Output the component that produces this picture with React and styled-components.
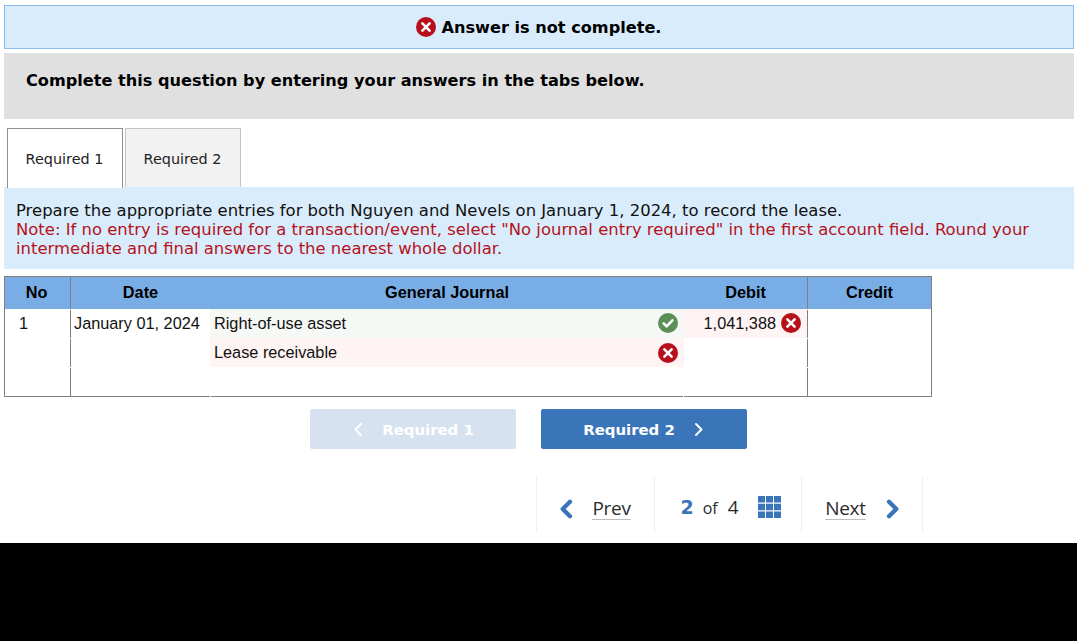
import React from 'react';
import styled, { createGlobalStyle } from 'styled-components';

const GlobalStyle = createGlobalStyle`
  html, body { margin: 0; padding: 0; background: #000; }
  body { font-family: "DejaVu Sans", sans-serif; }
`;

const Sheet = styled.div`
  width: 1077px;
  height: 543px;
  background: #fff;
  padding: 5px 3px 0 4px;
  box-sizing: border-box;
  overflow: hidden;
`;
const Filler = styled.div`
  height: 98px;
  background: #000;
`;

const Banner = styled.div`
  height: 44px;
  box-sizing: border-box;
  background: #d9ecfb;
  border: 1px solid #8dbbe8;
  display: flex;
  align-items: center;
  justify-content: center;
  gap: 5px;
  font-weight: bold;
  font-size: 16.15px;
  color: #000;
`;
const BannerText = styled.span`
  padding-top: 1px;
`;
const Instruction = styled.div`
  margin-top: 4px;
  height: 66px;
  box-sizing: border-box;
  background: #e0e0e0;
  padding: 17px 22px;
  font-weight: bold;
  font-size: 16.15px;
  line-height: 22px;
  color: #000;
`;

const Tabs = styled.div`
  display: flex;
  gap: 2px;
  margin: 9px 0 0 3px;
  height: 59px;
`;
const Tab = styled.div`
  width: 116px;
  height: ${p => (p.$active ? '60px' : '59px')};
  box-sizing: border-box;
  display: flex;
  align-items: center;
  justify-content: center;
  padding: 1px 1px 0 0;
  font-size: 14.4px;
  color: #222;
  position: relative;
  z-index: ${p => (p.$active ? 1 : 0)};
  background: ${p => (p.$active ? '#fff' : '#f2f2f2')};
  border: 1px solid ${p => (p.$active ? '#8f8f8f' : '#c4c4c4')};
  border-bottom: none;
`;

const Panel = styled.div`
  height: 82px;
  box-sizing: border-box;
  background: #d9ecfb;
  padding: 14px 12px 0 12px;
  font-size: 16.45px;
  line-height: 19px;
  color: #111;
`;
const Note = styled.div`
  color: #b5121b;
`;

const Table = styled.div`
  margin-top: 7px;
  width: 928px;
  height: 121px;
  box-sizing: border-box;
  border: 1px solid #7f7f7f;
  display: grid;
  grid-template-columns: 66px 139px 474px 124px 1fr;
  grid-template-rows: 32px 29px 29px 1fr;
  font-family: "Liberation Sans", Arial, sans-serif;
  font-size: 16.3px;
  color: #111;
`;
const Head = styled.div`
  background: #79ade5;
  font-weight: bold;
  color: #000;
  display: flex;
  align-items: center;
  justify-content: center;
  box-sizing: border-box;
  padding-bottom: 2px;
  border-right: ${p => (p.$line ? '1px solid #7f7f7f' : 'none')};
`;
const NoHead = styled(Head)`
  padding-right: 2px;
`;
const Cell = styled.div`
  box-sizing: border-box;
  position: relative;
  display: flex;
  align-items: center;
  padding: 0 4px;
  justify-content: ${p => p.$align || 'flex-start'};
  background: ${p => p.$bg || '#fff'};
  border-right: ${p => (p.$line ? '1px solid #7f7f7f' : 'none')};
  gap: 5px;

  /* the rules between the columns break for a pixel at each row */
  &::after {
    content: ${p => (p.$line ? '""' : 'none')};
    position: absolute;
    top: 0;
    right: -1px;
    width: 1px;
    height: 1px;
    background: #fff;
  }
`;
const NoCell = styled(Cell)`
  padding-left: 14px;
`;
const DateCell = styled(Cell)`
  padding-left: 3px;
`;
const DebitCell = styled(Cell)`
  padding-right: 6px;
`;
const AccountCell = styled(Cell)`
  justify-content: space-between;
  padding-right: 6px;
`;
const BlankAccount = styled(Cell)`
  &::before,
  &::after {
    content: "";
    position: absolute;
    bottom: -1px;
    width: 1px;
    height: 1px;
    background: #fff;
  }
  &::before { left: 0; }
  &::after { right: 0; top: auto; }
`;
const Mark = styled.span`
  display: flex;
  margin-top: ${p => (p.$low ? '1px' : '-1px')};
`;

const Buttons = styled.div`
  display: flex;
  gap: 25px;
  margin: 12px 0 0 306px;
`;
const NavButton = styled.div`
  width: 206px;
  height: 40px;
  border-radius: 2px;
  display: flex;
  align-items: center;
  justify-content: center;
  gap: 18px;
  padding-top: 1px;
  box-sizing: border-box;
  font-size: 14.9px;
  font-weight: bold;
  color: #fff;
  background: ${p => (p.$disabled ? '#d7e2f0' : '#3a75ba')};
`;

const Pager = styled.div`
  display: flex;
  margin: 28px 0 0 532px;
  height: 56px;
  width: 385px;
  border-left: 1px solid #efefef;
  border-right: 1px solid #efefef;
  color: #2b2b2b;
  font-size: 19px;
  font-family: "Open Sans", "DejaVu Sans", sans-serif;
`;
const PagerPart = styled.div`
  width: ${p => p.$width}px;
  box-sizing: border-box;
  display: flex;
  align-items: center;
  justify-content: center;
  gap: ${p => p.$gap || 0}px;
  padding: 7px ${p => p.$right || 0}px 0 ${p => p.$left || 0}px;
  border-right: ${p => (p.$line ? '1px solid #efefef' : 'none')};
`;
const PagerLink = styled.span`
  border-bottom: 1px solid #bdbdbd;
  line-height: 21px;
  letter-spacing: -0.3px;
`;
const Current = styled.span`
  color: #3a75ba;
  font-weight: bold;
  font-size: 19px;
  font-family: "DejaVu Sans", sans-serif;
  margin-right: 9px;
  margin-top: -3px;
`;
const Of = styled.span`
  font-size: 16px;
  margin-right: 10px;
  margin-top: -2px;
`;
const Total = styled.span`
  margin-right: 19px;
  margin-top: -4px;
`;
const GridWrap = styled.span`
  display: flex;
  margin-top: -3px;
`;

const Cross = () => (
  <svg width="20" height="20" viewBox="0 0 20 20">
    <circle cx="10" cy="10" r="10" fill="#b7101a" />
    <path d="M6.4 6.4l7.2 7.2M13.6 6.4l-7.2 7.2" stroke="#fff" strokeWidth="2.6" strokeLinecap="round" />
  </svg>
);
const Check = () => (
  <svg width="20" height="20" viewBox="0 0 20 20">
    <circle cx="10" cy="10" r="10" fill="#5c8f57" />
    <path d="M5.6 10.4l3 2.9 5.8-6" fill="none" stroke="#fff" strokeWidth="2.6" strokeLinecap="round" strokeLinejoin="round" />
  </svg>
);
const Chevron = ({ left, size = 12, width = 2, color = '#fff' }) => (
  <svg width={size} height={size * 1.25} viewBox="0 0 12 15">
    <path
      d={left ? 'M9 2L3.5 7.5L9 13' : 'M3 2L8.5 7.5L3 13'}
      fill="none"
      stroke={color}
      strokeWidth={width}
      strokeLinecap="round"
      strokeLinejoin="round"
    />
  </svg>
);
const GridIcon = () => (
  <svg width="23" height="22" viewBox="0 0 23 22">
    <path
      fill="#3a75ba"
      d="M0 0h7v6.6H0zM8 0h7v6.6H8zM16 0h7v6.6h-7zM0 7.7h7v6.6H0zM8 7.7h7v6.6H8zM16 7.7h7v6.6h-7zM0 15.4h7V22H0zM8 15.4h7V22H8zM16 15.4h7V22h-7z"
    />
  </svg>
);

export default function App() {
  return (
    <>
      <GlobalStyle />
      <Sheet>
        <Banner>
          <Cross />
          <BannerText>Answer is not complete.</BannerText>
        </Banner>
        <Instruction>Complete this question by entering your answers in the tabs below.</Instruction>
        <Tabs>
          <Tab $active>Required 1</Tab>
          <Tab>Required 2</Tab>
        </Tabs>
        <Panel>
          Prepare the appropriate entries for both Nguyen and Nevels on January 1, 2024, to record the lease.
          <Note>
            Note: If no entry is required for a transaction/event, select "No journal entry required" in the first account field. Round your intermediate and final answers to the nearest whole dollar.
          </Note>
        </Panel>
        <Table>
          <NoHead $line>No</NoHead>
          <Head>Date</Head>
          <Head>General Journal</Head>
          <Head $line>Debit</Head>
          <Head>Credit</Head>

          <NoCell $line>1</NoCell>
          <DateCell>January 01, 2024</DateCell>
          <AccountCell $bg="#f6f8f5">Right-of-use asset <Mark><Check /></Mark></AccountCell>
          <DebitCell $bg="#fdf4f3" $align="flex-end" $line>1,041,388 <Mark><Cross /></Mark></DebitCell>
          <Cell />

          <NoCell $line />
          <DateCell />
          <AccountCell $bg="#fdf4f3">Lease receivable <Mark $low><Cross /></Mark></AccountCell>
          <Cell $line />
          <Cell />

          <NoCell $line />
          <DateCell />
          <BlankAccount />
          <Cell $line />
          <Cell />
        </Table>
        <Buttons>
          <NavButton $disabled><Chevron left />Required 1</NavButton>
          <NavButton>Required 2<Chevron /></NavButton>
        </Buttons>
        <Pager>
          <PagerPart $width={118} $gap={18} $right={2} $line>
            <Chevron left size={16} width={3.2} color="#3a75ba" />
            <PagerLink>Prev</PagerLink>
          </PagerPart>
          <PagerPart $width={147} $left={5} $line>
            <Current>2</Current>
            <Of>of</Of>
            <Total>4</Total>
            <GridWrap><GridIcon /></GridWrap>
          </PagerPart>
          <PagerPart $width={118} $gap={19} $left={4}>
            <PagerLink>Next</PagerLink>
            <Chevron size={16} width={3.2} color="#3a75ba" />
          </PagerPart>
        </Pager>
      </Sheet>
      <Filler />
    </>
  );
}
